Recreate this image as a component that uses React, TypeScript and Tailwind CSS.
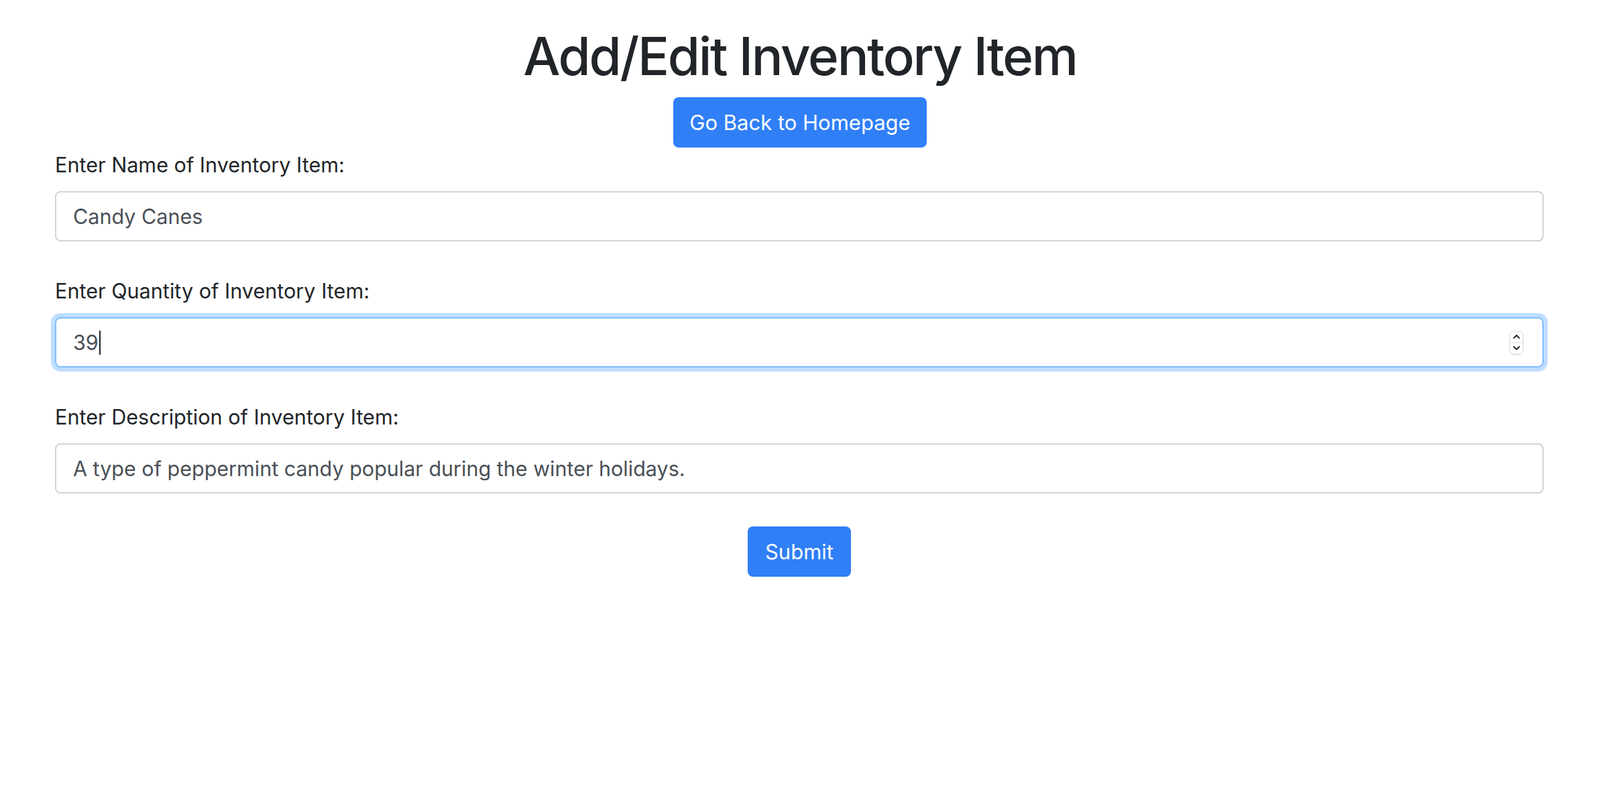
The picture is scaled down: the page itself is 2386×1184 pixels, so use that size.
import React from "react";

export default function App() {
  return (
    <div className="min-h-screen bg-white text-[#212529]" style={{ fontFamily: "Inter, 'Noto Sans', sans-serif" }}>
      <div className="pt-[36px]">
        <h1 className="text-center text-[78px] leading-[96px] font-medium tracking-[-2.3px] mb-[13px]">
          Add/Edit Inventory Item
        </h1>
        <div className="flex justify-center">
          <button className="h-[75px] px-[24px] rounded-[8px] bg-[#307ff6] text-white text-[31px] leading-none">
            Go Back to Homepage
          </button>
        </div>
      </div>
      <form className="pl-[82px] pr-[84px] pt-[2px]" onSubmit={(e) => e.preventDefault()}>
        <div className="mb-[50px]">
          <label className="block text-[30.6px] leading-[47px] mb-[16px]">Enter Name of Inventory Item:</label>
          <input
            readOnly
            value="Candy Canes"
            className="block w-full h-[75px] px-[25px] border-2 border-[#ced4da] rounded-[8px] text-[30.5px] text-[#495057] outline-none"
          />
        </div>
        <div className="mb-[50px]">
          <label className="block text-[30.6px] leading-[47px] mb-[16px]">Enter Quantity of Inventory Item:</label>
          <div className="relative flex items-center w-full h-[75px] px-[25px] border-2 border-[#80bdff] rounded-[8px] text-[30.5px] text-[#495057] shadow-[0_0_0_6px_rgba(0,123,255,0.25)]">
            <span>39</span>
            <span className="inline-block w-[2px] h-[36px] bg-[#212529] ml-[1px]" />
            <div className="absolute right-[28px] top-1/2 -translate-y-1/2 w-[21px] h-[35px] rounded-[6px] border border-[#d9d9d9] bg-white flex flex-col shadow-[0_1px_1px_rgba(0,0,0,0.06)]">
              <div className="flex-1 flex items-center justify-center border-b border-[#e2e2e2]">
                <svg width="11" height="7" viewBox="0 0 11 7"><path d="M1.5 5.5 L5.5 1.5 L9.5 5.5" fill="none" stroke="#222" strokeWidth="1.8" strokeLinecap="round" strokeLinejoin="round" /></svg>
              </div>
              <div className="flex-1 flex items-center justify-center">
                <svg width="11" height="7" viewBox="0 0 11 7"><path d="M1.5 1.5 L5.5 5.5 L9.5 1.5" fill="none" stroke="#222" strokeWidth="1.8" strokeLinecap="round" strokeLinejoin="round" /></svg>
              </div>
            </div>
          </div>
        </div>
        <div className="mb-[49px]">
          <label className="block text-[30.6px] leading-[47px] mb-[16px]">Enter Description of Inventory Item:</label>
          <input
            readOnly
            value="A type of peppermint candy popular during the winter holidays."
            className="block w-full h-[75px] px-[25px] border-2 border-[#ced4da] rounded-[8px] text-[30.5px] text-[#495057] outline-none"
          />
        </div>
        <div className="flex justify-center">
          <button type="submit" className="h-[75px] px-[26px] rounded-[8px] bg-[#307ff6] text-white text-[31px] leading-none">
            Submit
          </button>
        </div>
      </form>
    </div>
  );
}
